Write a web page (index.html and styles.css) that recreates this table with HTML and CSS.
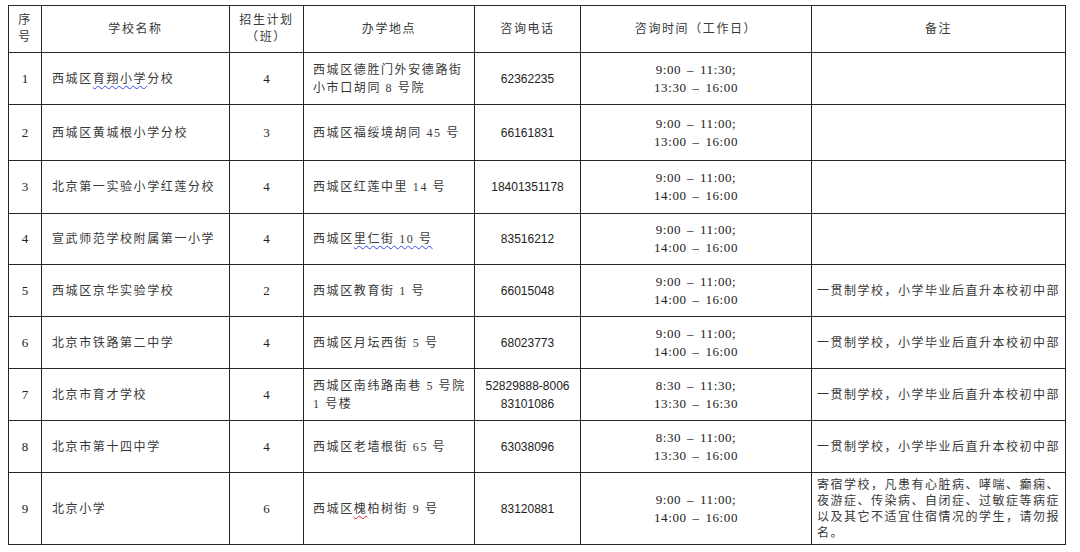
FILE: index.html
```html
<!DOCTYPE html>
<html lang="zh-CN">
<head>
<meta charset="utf-8">
<title>招生学校一览</title>
<link rel="stylesheet" href="styles.css">
</head>
<body>
<table class="sheet">
  <colgroup>
    <col class="c-no"><col class="c-name"><col class="c-plan"><col class="c-addr"><col class="c-tel"><col class="c-time"><col class="c-note">
  </colgroup>
  <thead>
    <tr class="h-head">
      <th class="stack">序<br>号</th>
      <th>学校名称</th>
      <th class="stack">招生计划<br>（班）</th>
      <th>办学地点</th>
      <th>咨询电话</th>
      <th>咨询时间（工作日）</th>
      <th>备注</th>
    </tr>
  </thead>
  <tbody>
    <tr class="h-52">
      <td class="no">1</td>
      <td class="txt">西城区<span class="wavy-blue">育翔小学</span>分校</td>
      <td class="num">4</td>
      <td class="addr">西城区德胜门外安德路街<br>小市口胡同 8 号院</td>
      <td class="tel">62362235</td>
      <td class="time">9:00 – 11:30;<br>13:30 – 16:00</td>
      <td class="note"></td>
    </tr>
    <tr class="h-56">
      <td class="no">2</td>
      <td class="txt">西城区黄城根小学分校</td>
      <td class="num">3</td>
      <td class="addr">西城区福绥境胡同 45 号</td>
      <td class="tel">66161831</td>
      <td class="time">9:00 – 11:00;<br>13:00 – 16:00</td>
      <td class="note"></td>
    </tr>
    <tr class="h-53">
      <td class="no">3</td>
      <td class="txt">北京第一实验小学红莲分校</td>
      <td class="num">4</td>
      <td class="addr">西城区红莲中里 14 号</td>
      <td class="tel">18401351178</td>
      <td class="time">9:00 – 11:00;<br>14:00 – 16:00</td>
      <td class="note"></td>
    </tr>
    <tr class="h-51">
      <td class="no">4</td>
      <td class="txt">宣武师范学校附属第一小学</td>
      <td class="num">4</td>
      <td class="addr">西城区<span class="wavy-blue">里仁街 10 号</span></td>
      <td class="tel">83516212</td>
      <td class="time">9:00 – 11:00;<br>14:00 – 16:00</td>
      <td class="note"></td>
    </tr>
    <tr class="h-52">
      <td class="no">5</td>
      <td class="txt">西城区京华实验学校</td>
      <td class="num">2</td>
      <td class="addr">西城区教育街 1 号</td>
      <td class="tel">66015048</td>
      <td class="time">9:00 – 11:00;<br>14:00 – 16:00</td>
      <td class="note">一贯制学校，小学毕业后直升本校初中部</td>
    </tr>
    <tr class="h-52">
      <td class="no">6</td>
      <td class="txt">北京市铁路第二中学</td>
      <td class="num">4</td>
      <td class="addr">西城区月坛西街 5 号</td>
      <td class="tel">68023773</td>
      <td class="time">9:00 – 11:00;<br>14:00 – 16:00</td>
      <td class="note">一贯制学校，小学毕业后直升本校初中部</td>
    </tr>
    <tr class="h-52">
      <td class="no">7</td>
      <td class="txt">北京市育才学校</td>
      <td class="num">4</td>
      <td class="addr">西城区南纬路南巷 5 号院<br>1 号楼</td>
      <td class="tel">52829888-8006<br>83101086</td>
      <td class="time">8:30 – 11:30;<br>13:30 – 16:30</td>
      <td class="note">一贯制学校，小学毕业后直升本校初中部</td>
    </tr>
    <tr class="h-52">
      <td class="no">8</td>
      <td class="txt">北京市第十四中学</td>
      <td class="num">4</td>
      <td class="addr">西城区老墙根街 65 号</td>
      <td class="tel">63038096</td>
      <td class="time">8:30 – 11:00;<br>13:30 – 16:00</td>
      <td class="note">一贯制学校，小学毕业后直升本校初中部</td>
    </tr>
    <tr class="h-72">
      <td class="no">9</td>
      <td class="txt">北京小学</td>
      <td class="num">6</td>
      <td class="addr">西城区<span class="wavy-red">槐</span>柏树街 9 号</td>
      <td class="tel">83120881</td>
      <td class="time">9:00 – 11:00;<br>14:00 – 16:00</td>
      <td class="note tight">寄宿学校，凡患有心脏病、哮喘、癫痫、<br>夜游症、传染病、自闭症、过敏症等病症<br>以及其它不适宜住宿情况的学生，请勿报<br>名。</td>
    </tr>
  </tbody>
</table>
</body>
</html>
```

FILE: styles.css
```css
html, body {
  background: #ffffff;
}
body {
  margin: 5px 8px 0 8px;
  font-family: "Liberation Serif", "Noto Sans CJK SC", serif;
  color: #383838;
}
.sheet {
  border-collapse: collapse;
  table-layout: fixed;
  width: 1057px;
}
.c-no { width: 33px; }
.c-name { width: 188px; }
.c-plan { width: 74px; }
.c-addr { width: 171px; }
.c-tel { width: 106px; }
.c-time { width: 231px; }
.c-note { width: 254px; }

.sheet th,
.sheet td {
  border: 1px solid #262626;
  padding: 0;
  vertical-align: middle;
  font-size: 12px;
  font-weight: 400;
  letter-spacing: 1.6px;
  line-height: 18px;
  white-space: nowrap;
  overflow: hidden;
}
.sheet th {
  text-align: center;
  color: #383838;
}
.sheet th.stack {
  line-height: 17px;
}
.h-head { height: 47px; }
.h-51 { height: 51px; }
.h-52 { height: 52px; }
.h-53 { height: 53px; }
.h-56 { height: 56px; }
.h-72 { height: 72px; }

.sheet td.no,
.sheet td.num {
  text-align: center;
  font-size: 13px;
  letter-spacing: 0;
  color: #222;
}
.sheet td.txt {
  text-align: left;
  padding-left: 10px;
}
.sheet td.addr {
  text-align: left;
  padding-left: 9px;
}
.sheet td.tel {
  text-align: center;
  font-family: "Liberation Sans", sans-serif;
  font-size: 12px;
  letter-spacing: 0;
  color: #222;
}
.sheet td.time {
  text-align: center;
  font-size: 13px;
  letter-spacing: 0.6px;
  word-spacing: 2px;
  color: #222;
}
.sheet td.note {
  text-align: left;
  padding-left: 5px;
  letter-spacing: 1.5px;
}
.sheet td.note.tight {
  line-height: 16px;
}
.wavy-blue {
  text-decoration: underline wavy #3344ee;
  text-decoration-thickness: 1px;
  text-underline-offset: 2px;
}
.wavy-red {
  text-decoration: underline wavy #e02020;
  text-decoration-thickness: 1px;
  text-underline-offset: 2px;
}
```
